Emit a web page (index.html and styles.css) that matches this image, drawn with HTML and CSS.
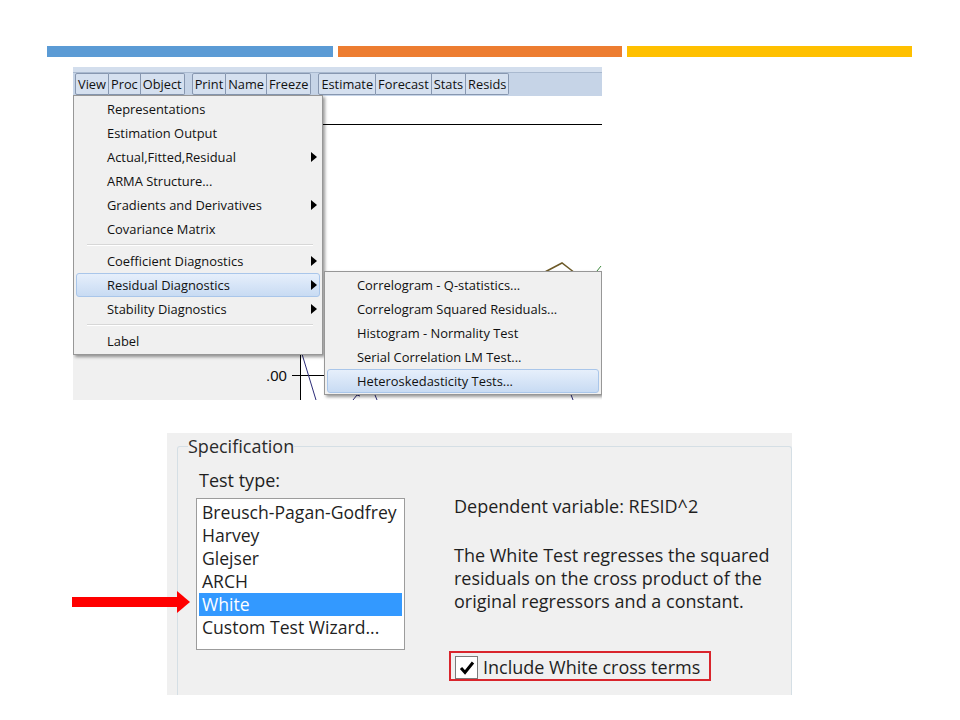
FILE: index.html
```html
<!DOCTYPE html>
<html lang="en">
<head>
    <meta charset="UTF-8">
    <meta name="viewport" content="width=device-width, initial-scale=1.0">
    <title>Heteroskedasticity Tests</title>
    <link rel="stylesheet" href="styles.css">
</head>
<body>
    <div class="bars">
        <div class="bar bar-blue"></div>
        <div class="bar bar-orange"></div>
        <div class="bar bar-yellow"></div>
    </div>

    <div class="shot1">
        <div class="toolbar">
            <div class="tb-group">
                <span class="tb-btn">View</span><span class="tb-btn">Proc</span><span class="tb-btn">Object</span>
            </div>
            <div class="tb-group">
                <span class="tb-btn">Print</span><span class="tb-btn">Name</span><span class="tb-btn">Freeze</span>
            </div>
            <div class="tb-group">
                <span class="tb-btn">Estimate</span><span class="tb-btn">Forecast</span><span class="tb-btn">Stats</span><span class="tb-btn">Resids</span>
            </div>
        </div>
        <div class="view">
            <svg class="chart" width="529" height="304" viewBox="0 0 529 304">
                <rect x="0" y="28" width="227" height="276" fill="#f0f0f0"/>
                <line x1="227" y1="28.5" x2="529" y2="28.5" stroke="#000" stroke-width="1"/>
                <line x1="227.5" y1="28" x2="227.5" y2="304" stroke="#000" stroke-width="1"/>
                <line x1="219" y1="279.5" x2="300" y2="279.5" stroke="#000" stroke-width="1"/>
                <text x="193" y="285" class="axis-label">.00</text>
                <polyline points="229,258 243,304" fill="none" stroke="#2c2c78" stroke-width="1"/>
                <polyline points="280,304 284,299 287,300" fill="none" stroke="#2c2c78" stroke-width="1"/>
                <polyline points="302,299 304,304" fill="none" stroke="#2c2c78" stroke-width="1"/>
                <polyline points="497,296 500,304" fill="none" stroke="#2c2c78" stroke-width="1"/>
                <polyline points="470,177 489,167 502,177" fill="none" stroke="#6d5a28" stroke-width="1.5"/>
                <polyline points="524,175 528,170" fill="none" stroke="#3d8b3d" stroke-width="1"/>
            </svg>
        </div>

        <div class="menu main-menu">
            <div class="item">Representations</div>
            <div class="item">Estimation Output</div>
            <div class="item">Actual,Fitted,Residual<span class="arrow-r"></span></div>
            <div class="item">ARMA Structure...</div>
            <div class="item">Gradients and Derivatives<span class="arrow-r"></span></div>
            <div class="item">Covariance Matrix</div>
            <div class="sep"></div>
            <div class="item">Coefficient Diagnostics<span class="arrow-r"></span></div>
            <div class="item active">Residual Diagnostics<span class="arrow-r"></span></div>
            <div class="item">Stability Diagnostics<span class="arrow-r"></span></div>
            <div class="sep"></div>
            <div class="item">Label</div>
        </div>

        <div class="menu sub-menu">
            <div class="item">Correlogram - Q-statistics...</div>
            <div class="item">Correlogram Squared Residuals...</div>
            <div class="item">Histogram - Normality Test</div>
            <div class="item">Serial Correlation LM Test...</div>
            <div class="item active">Heteroskedasticity Tests...</div>
        </div>
    </div>

    <div class="dialog-row">
        <svg class="pointer" width="119" height="23" viewBox="0 0 119 23">
            <rect x="0" y="6" width="108" height="10" fill="#ff0000"/>
            <polygon points="105,0 118,11 105,22" fill="#ff0000"/>
        </svg>
        <div class="dialog">
            <fieldset class="group">
                <legend>Specification</legend>
                <div class="spec">
                    <div class="test-col">
                        <div class="test-label">Test type:</div>
                        <ul class="listbox">
                            <li>Breusch-Pagan-Godfrey</li>
                            <li>Harvey</li>
                            <li>Glejser</li>
                            <li>ARCH</li>
                            <li class="selected">White</li>
                            <li>Custom Test Wizard...</li>
                        </ul>
                    </div>
                    <div class="info-col">
                        <p class="dep">Dependent variable: RESID^2</p>
                        <p class="desc">The White Test regresses the squared<br>residuals on the cross product of the<br>original regressors and a constant.</p>
                        <div class="cross">
                            <span class="check">
                                <svg width="20" height="20" viewBox="0 0 20 20">
                                    <path d="M4 10 L8 14.5 L16 4.5" fill="none" stroke="#000" stroke-width="3"/>
                                </svg>
                            </span>
                            <span>Include White cross terms</span>
                        </div>
                    </div>
                </div>
            </fieldset>
        </div>
    </div>
</body>
</html>
```

FILE: styles.css
```css
body {
    margin: 0;
    background: #fff;
    font-family: 'Open Sans', sans-serif;
}

/* coloured bars on top */
.bars {
    display: flex;
    gap: 5px;
    padding: 46px 0 0 47px;
}

.bar {
    height: 11px;
}

.bar-blue {
    width: 286px;
    background: #5b9bd5;
}

.bar-orange {
    width: 284px;
    background: #ed7d31;
}

.bar-yellow {
    width: 285px;
    background: #ffc000;
}

/* first screenshot: menus */
.shot1 {
    position: relative;
    width: 529px;
    height: 333px;
    margin: 10px 0 0 73px;
    overflow: hidden;
}

.toolbar {
    display: flex;
    gap: 7px;
    height: 29px;
    box-sizing: border-box;
    padding: 6px 0 0 2px;
    background: linear-gradient(#d3deed 0, #d3deed 5px, #a9b9cf 5px, #a9b9cf 6px, #c6d4e7 6px);
}

.tb-group {
    display: flex;
    height: 22px;
}

.tb-btn {
    font-size: 12.8px;
    line-height: 21px;
    padding: 0 2px;
    color: #111;
    background: #d5e0ef;
    border: 1px solid #8797b0;
    border-left-width: 0;
}

.tb-btn:first-child {
    border-left-width: 1px;
    border-radius: 2px 0 0 2px;
}

.tb-btn:last-child {
    border-radius: 0 2px 2px 0;
}

.view {
    height: 304px;
    background: #fff;
}

.chart {
    display: block;
}

.axis-label {
    font-family: 'Liberation Sans', sans-serif;
    font-size: 15px;
    fill: #111;
}

.menu {
    position: absolute;
    box-sizing: border-box;
    padding: 1px 2px;
    background: #f0f0f0;
    border: 1px solid #979797;
    box-shadow: 2px 2px 3px rgba(0, 0, 0, 0.4);
    font-size: 12.9px;
    color: #111;
}

.main-menu {
    left: 0;
    top: 28px;
    width: 250px;
}

.sub-menu {
    left: 251px;
    top: 204px;
    width: 278px;
}

.item {
    display: flex;
    align-items: center;
    justify-content: space-between;
    height: 24px;
    box-sizing: border-box;
    padding: 0 2px 0 30px;
    border: 1px solid transparent;
    border-radius: 3px;
}

.sub-menu .item {
    padding-left: 29px;
}

.item.active {
    background: linear-gradient(#e6effb, #c8dbf3);
    border-color: #a9c6ea;
}

.arrow-r {
    width: 0;
    height: 0;
    border-left: 6px solid #000;
    border-top: 5px solid transparent;
    border-bottom: 5px solid transparent;
}

.sep {
    height: 1px;
    margin: 3px 7px 3px 11px;
    background: #d7d7d7;
    border-bottom: 1px solid #fff;
}

/* second screenshot: dialog */
.dialog-row {
    position: relative;
    padding-top: 33px;
}

.pointer {
    position: absolute;
    left: 72px;
    top: 191px;
}

.dialog {
    width: 625px;
    height: 262px;
    margin-left: 167px;
    box-sizing: border-box;
    padding: 1px 0 0 10px;
    background: #f0f0f0;
    overflow: hidden;
    font-size: 18px;
    color: #1f1f1f;
}

.group {
    height: 300px;
    margin: 0;
    padding: 11px 0 0 10px;
    border: 1px solid #d5dfe5;
    border-bottom: 0;
    border-radius: 3px 3px 0 0;
    min-inline-size: 0;
}

.group legend {
    padding: 0;
    line-height: 24px;
    color: #2b2b2b;
}

.spec {
    display: flex;
    padding-left: 8px;
}

.test-col {
    width: 209px;
}

.test-label {
    margin-left: 3px;
    line-height: 23px;
}

.listbox {
    height: 152px;
    box-sizing: border-box;
    margin: 6px 0 0;
    padding: 2px;
    list-style: none;
    background: #fff;
    border: 1px solid #9c9c9c;
    font-size: 17.6px;
}

.listbox li {
    line-height: 23px;
    padding-left: 3px;
}

.listbox li.selected {
    background: #3399ff;
    color: #fff;
}

.info-col {
    margin-left: 49px;
}

.dep,
.desc {
    margin: 26px 0 0;
    line-height: 23px;
}

.cross {
    display: flex;
    align-items: center;
    gap: 5px;
    width: fit-content;
    margin: 38px 0 0 -5px;
    padding: 3px 9px 0 4px;
    line-height: 23px;
    border: 2px solid #d9252c;
}

.check {
    display: flex;
    align-items: center;
    justify-content: center;
    width: 23px;
    height: 23px;
    box-sizing: border-box;
    background: #fff;
    border: 1px solid #7b7b7b;
}
```
